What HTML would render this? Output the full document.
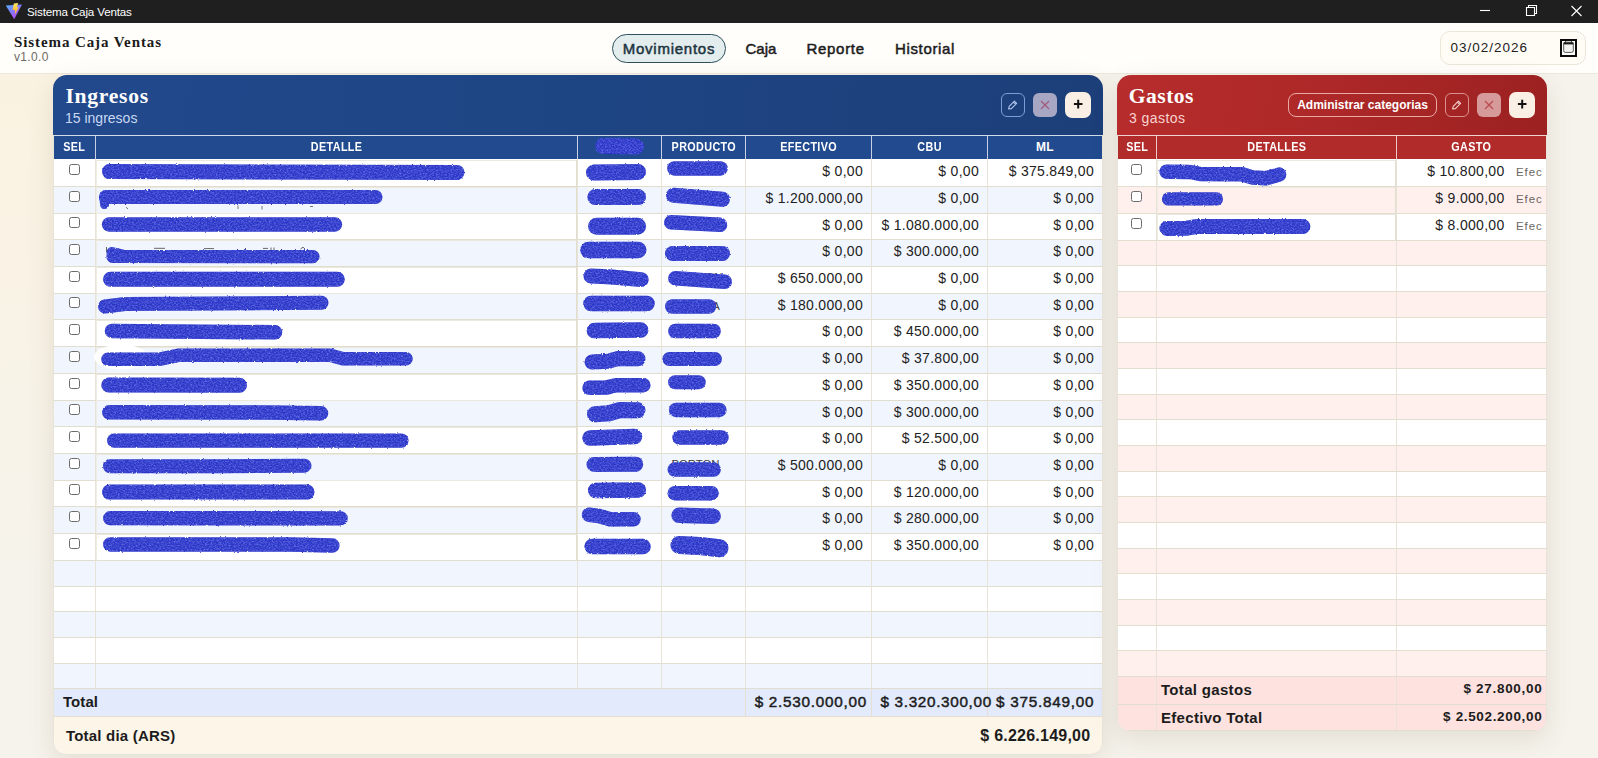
<!DOCTYPE html>
<html lang="es"><head><meta charset="utf-8"><title>Sistema Caja Ventas</title>
<style>
*{box-sizing:border-box;margin:0;padding:0}
html,body{width:1598px;height:758px;overflow:hidden}
body{position:relative;font-family:"Liberation Sans",sans-serif;color:#1c1c1c;
 background:radial-gradient(1100px 800px at 0% 0%,#fbf2df 0%,rgba(251,242,223,0) 75%),#f6f3ec;}
.abs{position:absolute}
#titlebar{left:0;top:0;width:1598px;height:23px;background:#1f1f1f;color:#fff;font-size:11.6px}
#titlebar .t{position:absolute;left:27px;top:5px;letter-spacing:-0.15px}
#apphead{left:0;top:23px;width:1598px;height:51px;background:#fffefb;border-bottom:1px solid #ece7dc}
#brand{left:14px;top:34px;font-family:"Liberation Serif",serif;font-weight:bold;font-size:15px;letter-spacing:.9px;color:#1b1b1b;white-space:nowrap}
#ver{left:14px;top:50px;font-size:12px;color:#6d6a64;letter-spacing:.35px}
.nav{top:35px;height:29px;line-height:28px;font-size:15px;color:#1c1c1c;white-space:nowrap;-webkit-text-stroke:.5px #1c1c1c}
#navact{left:612px;top:34px;width:114px;letter-spacing:.75px;border:1px solid #2f4f5c;border-radius:15px;background:#e4edee;text-align:center;color:#1d3540;-webkit-text-stroke:.5px #1d3540}
#date{left:1440px;top:31px;width:146px;height:34px;border:1px solid #ebe6da;border-radius:10px;background:#fffcf6}
#date span{position:absolute;left:9.5px;top:8px;font-size:13.5px;color:#222;letter-spacing:1px}
.panel{overflow:hidden}
.phead{position:absolute;left:0;top:0;width:100%;height:60px}
.ptitle{position:absolute;left:11.5px;top:9.25px;font-family:"Liberation Serif",serif;font-weight:bold;font-size:21.6px;letter-spacing:.72px;color:#fff;white-space:nowrap}
.psub{position:absolute;left:11px;top:35px;font-size:14px;white-space:nowrap}
.th{position:absolute;top:61px;height:23px;line-height:22px;text-align:center;color:#fff;font-weight:bold;font-size:12px;letter-spacing:.4px;white-space:nowrap;border-right:1px solid rgba(255,255,255,.75)}
.th span{display:inline-block;transform:scaleX(.9)}
.row{position:absolute;left:0;width:100%;border-bottom:1px solid #e2decf}
.c{position:absolute;top:0;height:100%;border-right:1px solid #e7e3d7}
.num{text-align:right;font-size:14px;letter-spacing:.3px;color:#222;white-space:nowrap;padding-right:8px}
.cb{position:absolute;width:11px;height:11px;border:1px solid #6b6b6b;border-radius:2.5px;background:#fff}
.inp{position:absolute;border:1px solid #e2decf;border-top-color:#ebe8de;border-left-color:#efece3}
.scr{position:absolute;background:#2c36c9;border-radius:9px}
.btn{position:absolute;top:18px;width:24px;height:24px;border-radius:6px}
</style></head><body>

<div id="titlebar" class="abs"><svg class="abs" style="left:5px;top:3px" width="18" height="18" viewBox="0 0 18 18"><defs><linearGradient id="vg" x1="0" y1="0" x2="0.75" y2="1"><stop offset="0" stop-color="#4fb6ff"/><stop offset="1" stop-color="#bd3cf6"/></linearGradient><linearGradient id="vy" x1="0" y1="0" x2="0" y2="1"><stop offset="0" stop-color="#ffe663"/><stop offset="1" stop-color="#ffa91c"/></linearGradient></defs><path d="M0.8 2.6 L17 1.4 L9.2 16.2 Z" fill="url(#vg)"/><path d="M8.8 0.4 L13.2 0 L11.8 4.3 L13.8 4 L9.9 11.6 L10 6.7 L7.6 7.1 Z" fill="url(#vy)"/></svg><span class="t">Sistema Caja Ventas</span>
<svg class="abs" style="left:1460px;top:0" width="138" height="23" viewBox="0 0 138 23"><g stroke="#fff" stroke-width="1.1" fill="none"><path d="M20 10.5 H30"/><path d="M66.5 7.5 H74.5 V15.5 H66.5 Z" /><path d="M68.5 7.5 V5.5 H76.5 V13.5 H74.5"/><path d="M111.5 6 L121.5 16 M121.5 6 L111.5 16"/></g></svg></div>
<div id="apphead" class="abs"></div>
<div id="brand" class="abs">Sistema Caja Ventas</div><div id="ver" class="abs">v1.0.0</div>
<div id="navact" class="abs nav">Movimientos</div>
<div class="abs nav" style="left:745.5px">Caja</div><div class="abs nav" style="left:806.5px;letter-spacing:.7px">Reporte</div><div class="abs nav" style="left:895px;letter-spacing:.65px">Historial</div>
<div id="date" class="abs"><span>03/02/2026</span><svg class="abs" style="left:119px;top:7px" width="17" height="18" viewBox="0 0 17 18"><rect x="1" y="1" width="15" height="16" fill="#fdfcf8" stroke="#0a0a0a" stroke-width="2"/><rect x="3.7" y="3.2" width="9.6" height="10.2" rx="1.6" fill="#f1f1f1" stroke="#5a5a5a" stroke-width="1"/><path d="M3.6 3.4 H13.4 V5.4 H3.6 Z" fill="#1a1a1a"/><path d="M5.6 2.2 V3.6 M11.4 2.2 V3.6" stroke="#1a1a1a" stroke-width="1"/></svg></div>
<div class="abs" style="left:53px;top:75px;width:1050px;height:679px;border-radius:14px 14px 13px 13px;box-shadow:0 8px 26px rgba(90,75,40,.12)"></div>
<div class="abs" style="left:53px;top:75px;width:1050px;height:679px;border-radius:14px 14px 13px 13px;overflow:hidden;background:#e9e4d8">
<div class="abs" style="left:0;top:0;width:1050px;height:60px;background:linear-gradient(100deg,#21498c 0%,#1e4584 45%,#1c3f79 100%)"></div>
<div class="abs panel" style="left:1px;top:0;width:1048px;height:679px;border-radius:0 0 12px 12px">
<div class="abs" style="left:0;top:60px;width:1048px;height:24px;background:#214a8f;border-top:1px solid rgba(255,255,255,.8)"></div>
<div class="ptitle">Ingresos</div><div class="psub" style="color:#c9d8f3">15 ingresos</div>
<div class="btn" style="left:947px;border:1px solid #7d9dd6"><svg width="22" height="22" viewBox="0 0 22 22"><path d="M6.6 15 L7.2 12.4 L12.4 7.2 L14.6 9.4 L9.4 14.6 Z M11.5 8.1 L13.7 10.3" fill="none" stroke="#b3c7ee" stroke-width="1.1" stroke-linejoin="round"/></svg></div>
<div class="btn" style="left:979px;background:#a8a7c3"><svg width="24" height="24" viewBox="0 0 24 24"><path d="M8 8 L16 16 M16 8 L8 16" stroke="#a2567a" stroke-width="1.1"/></svg></div>
<div class="btn" style="left:1011px;width:26px;height:26px;top:17px;background:#f9efe4;border-radius:7px"><svg width="26" height="26" viewBox="0 0 26 26"><path d="M13.2 7.8 V16.4 M8.9 12.1 H17.5" stroke="#111" stroke-width="2"/></svg></div>
<div class="th" style="left:0px;width:42px;"><span class="m">SEL</span></div>
<div class="th" style="left:42px;width:482px;"><span class="m">DETALLE</span></div>
<div class="th" style="left:524px;width:84px;"><span class="m"></span></div>
<div class="th" style="left:608px;width:84px;"><span class="m">PRODUCTO</span></div>
<div class="th" style="left:692px;width:126px;"><span class="m">EFECTIVO</span></div>
<div class="th" style="left:818px;width:116px;"><span class="m">CBU</span></div>
<div class="th" style="left:934px;width:114px;border-right:none;"><span class="m" style="transform:none">ML</span></div>
<div class="row" style="top:84px;height:28px;background:#fff">
<div class="c" style="left:0px;width:42px;"></div>
<div class="c" style="left:42px;width:482px;"></div>
<div class="c" style="left:524px;width:84px;"></div>
<div class="c" style="left:608px;width:84px;"></div>
<div class="c num" style="left:692px;width:126px;padding-top:1px;line-height:23.4px;"><span>$ 0,00</span></div>
<div class="c num" style="left:818px;width:116px;padding-top:1px;line-height:23.4px;"><span>$ 0,00</span></div>
<div class="c num" style="left:934px;width:114px;padding-top:1px;line-height:23.4px;border-right:none;"><span>$ 375.849,00</span></div>
<div class="cb" style="left:15px;top:5.4px"></div>
<div class="inp" style="left:42px;top:1px;width:481px;height:27px"></div>
</div>
<div class="row" style="top:112px;height:27px;background:#f1f6fe">
<div class="c" style="left:0px;width:42px;"></div>
<div class="c" style="left:42px;width:482px;"></div>
<div class="c" style="left:524px;width:84px;"></div>
<div class="c" style="left:608px;width:84px;"></div>
<div class="c num" style="left:692px;width:126px;padding-top:0px;line-height:23.4px;"><span>$ 1.200.000,00</span></div>
<div class="c num" style="left:818px;width:116px;padding-top:0px;line-height:23.4px;"><span>$ 0,00</span></div>
<div class="c num" style="left:934px;width:114px;padding-top:0px;line-height:23.4px;border-right:none;"><span>$ 0,00</span></div>
<div class="cb" style="left:15px;top:4.4px"></div>
<div class="inp" style="left:42px;top:0px;width:481px;height:27px"></div>
</div>
<div class="row" style="top:139px;height:26px;background:#fff">
<div class="c" style="left:0px;width:42px;"></div>
<div class="c" style="left:42px;width:482px;"></div>
<div class="c" style="left:524px;width:84px;"></div>
<div class="c" style="left:608px;width:84px;"></div>
<div class="c num" style="left:692px;width:126px;padding-top:-1px;line-height:23.4px;"><span>$ 0,00</span></div>
<div class="c num" style="left:818px;width:116px;padding-top:-1px;line-height:23.4px;"><span>$ 1.080.000,00</span></div>
<div class="c num" style="left:934px;width:114px;padding-top:-1px;line-height:23.4px;border-right:none;"><span>$ 0,00</span></div>
<div class="cb" style="left:15px;top:3.4px"></div>
<div class="inp" style="left:42px;top:-1px;width:481px;height:27px"></div>
</div>
<div class="row" style="top:165px;height:27px;background:#f1f6fe">
<div class="c" style="left:0px;width:42px;"></div>
<div class="c" style="left:42px;width:482px;"></div>
<div class="c" style="left:524px;width:84px;"></div>
<div class="c" style="left:608px;width:84px;"></div>
<div class="c num" style="left:692px;width:126px;padding-top:0px;line-height:23.4px;"><span>$ 0,00</span></div>
<div class="c num" style="left:818px;width:116px;padding-top:0px;line-height:23.4px;"><span>$ 300.000,00</span></div>
<div class="c num" style="left:934px;width:114px;padding-top:0px;line-height:23.4px;border-right:none;"><span>$ 0,00</span></div>
<div class="cb" style="left:15px;top:4.4px"></div>
<div class="inp" style="left:42px;top:0px;width:481px;height:27px"></div>
</div>
<div class="row" style="top:192px;height:27px;background:#fff">
<div class="c" style="left:0px;width:42px;"></div>
<div class="c" style="left:42px;width:482px;"></div>
<div class="c" style="left:524px;width:84px;"></div>
<div class="c" style="left:608px;width:84px;"></div>
<div class="c num" style="left:692px;width:126px;padding-top:0px;line-height:23.4px;"><span>$ 650.000,00</span></div>
<div class="c num" style="left:818px;width:116px;padding-top:0px;line-height:23.4px;"><span>$ 0,00</span></div>
<div class="c num" style="left:934px;width:114px;padding-top:0px;line-height:23.4px;border-right:none;"><span>$ 0,00</span></div>
<div class="cb" style="left:15px;top:4.4px"></div>
<div class="inp" style="left:42px;top:0px;width:481px;height:27px"></div>
</div>
<div class="row" style="top:219px;height:26px;background:#f1f6fe">
<div class="c" style="left:0px;width:42px;"></div>
<div class="c" style="left:42px;width:482px;"></div>
<div class="c" style="left:524px;width:84px;"></div>
<div class="c" style="left:608px;width:84px;"></div>
<div class="c num" style="left:692px;width:126px;padding-top:-1px;line-height:23.4px;"><span>$ 180.000,00</span></div>
<div class="c num" style="left:818px;width:116px;padding-top:-1px;line-height:23.4px;"><span>$ 0,00</span></div>
<div class="c num" style="left:934px;width:114px;padding-top:-1px;line-height:23.4px;border-right:none;"><span>$ 0,00</span></div>
<div class="cb" style="left:15px;top:3.4px"></div>
<div class="inp" style="left:42px;top:-1px;width:481px;height:27px"></div>
</div>
<div class="row" style="top:245px;height:27px;background:#fff">
<div class="c" style="left:0px;width:42px;"></div>
<div class="c" style="left:42px;width:482px;"></div>
<div class="c" style="left:524px;width:84px;"></div>
<div class="c" style="left:608px;width:84px;"></div>
<div class="c num" style="left:692px;width:126px;padding-top:0px;line-height:23.4px;"><span>$ 0,00</span></div>
<div class="c num" style="left:818px;width:116px;padding-top:0px;line-height:23.4px;"><span>$ 450.000,00</span></div>
<div class="c num" style="left:934px;width:114px;padding-top:0px;line-height:23.4px;border-right:none;"><span>$ 0,00</span></div>
<div class="cb" style="left:15px;top:4.4px"></div>
<div class="inp" style="left:42px;top:0px;width:481px;height:27px"></div>
</div>
<div class="row" style="top:272px;height:27px;background:#f1f6fe">
<div class="c" style="left:0px;width:42px;"></div>
<div class="c" style="left:42px;width:482px;"></div>
<div class="c" style="left:524px;width:84px;"></div>
<div class="c" style="left:608px;width:84px;"></div>
<div class="c num" style="left:692px;width:126px;padding-top:0px;line-height:23.4px;"><span>$ 0,00</span></div>
<div class="c num" style="left:818px;width:116px;padding-top:0px;line-height:23.4px;"><span>$ 37.800,00</span></div>
<div class="c num" style="left:934px;width:114px;padding-top:0px;line-height:23.4px;border-right:none;"><span>$ 0,00</span></div>
<div class="cb" style="left:15px;top:4.4px"></div>
<div class="inp" style="left:42px;top:0px;width:481px;height:27px"></div>
</div>
<div class="row" style="top:299px;height:27px;background:#fff">
<div class="c" style="left:0px;width:42px;"></div>
<div class="c" style="left:42px;width:482px;"></div>
<div class="c" style="left:524px;width:84px;"></div>
<div class="c" style="left:608px;width:84px;"></div>
<div class="c num" style="left:692px;width:126px;padding-top:0px;line-height:23.4px;"><span>$ 0,00</span></div>
<div class="c num" style="left:818px;width:116px;padding-top:0px;line-height:23.4px;"><span>$ 350.000,00</span></div>
<div class="c num" style="left:934px;width:114px;padding-top:0px;line-height:23.4px;border-right:none;"><span>$ 0,00</span></div>
<div class="cb" style="left:15px;top:4.4px"></div>
<div class="inp" style="left:42px;top:0px;width:481px;height:27px"></div>
</div>
<div class="row" style="top:326px;height:26px;background:#f1f6fe">
<div class="c" style="left:0px;width:42px;"></div>
<div class="c" style="left:42px;width:482px;"></div>
<div class="c" style="left:524px;width:84px;"></div>
<div class="c" style="left:608px;width:84px;"></div>
<div class="c num" style="left:692px;width:126px;padding-top:-1px;line-height:23.4px;"><span>$ 0,00</span></div>
<div class="c num" style="left:818px;width:116px;padding-top:-1px;line-height:23.4px;"><span>$ 300.000,00</span></div>
<div class="c num" style="left:934px;width:114px;padding-top:-1px;line-height:23.4px;border-right:none;"><span>$ 0,00</span></div>
<div class="cb" style="left:15px;top:3.4px"></div>
<div class="inp" style="left:42px;top:-1px;width:481px;height:27px"></div>
</div>
<div class="row" style="top:352px;height:27px;background:#fff">
<div class="c" style="left:0px;width:42px;"></div>
<div class="c" style="left:42px;width:482px;"></div>
<div class="c" style="left:524px;width:84px;"></div>
<div class="c" style="left:608px;width:84px;"></div>
<div class="c num" style="left:692px;width:126px;padding-top:0px;line-height:23.4px;"><span>$ 0,00</span></div>
<div class="c num" style="left:818px;width:116px;padding-top:0px;line-height:23.4px;"><span>$ 52.500,00</span></div>
<div class="c num" style="left:934px;width:114px;padding-top:0px;line-height:23.4px;border-right:none;"><span>$ 0,00</span></div>
<div class="cb" style="left:15px;top:4.4px"></div>
<div class="inp" style="left:42px;top:0px;width:481px;height:27px"></div>
</div>
<div class="row" style="top:379px;height:27px;background:#f1f6fe">
<div class="c" style="left:0px;width:42px;"></div>
<div class="c" style="left:42px;width:482px;"></div>
<div class="c" style="left:524px;width:84px;"></div>
<div class="c" style="left:608px;width:84px;"></div>
<div class="c num" style="left:692px;width:126px;padding-top:0px;line-height:23.4px;"><span>$ 500.000,00</span></div>
<div class="c num" style="left:818px;width:116px;padding-top:0px;line-height:23.4px;"><span>$ 0,00</span></div>
<div class="c num" style="left:934px;width:114px;padding-top:0px;line-height:23.4px;border-right:none;"><span>$ 0,00</span></div>
<div class="cb" style="left:15px;top:4.4px"></div>
<div class="inp" style="left:42px;top:0px;width:481px;height:27px"></div>
</div>
<div class="row" style="top:406px;height:26px;background:#fff">
<div class="c" style="left:0px;width:42px;"></div>
<div class="c" style="left:42px;width:482px;"></div>
<div class="c" style="left:524px;width:84px;"></div>
<div class="c" style="left:608px;width:84px;"></div>
<div class="c num" style="left:692px;width:126px;padding-top:-1px;line-height:23.4px;"><span>$ 0,00</span></div>
<div class="c num" style="left:818px;width:116px;padding-top:-1px;line-height:23.4px;"><span>$ 120.000,00</span></div>
<div class="c num" style="left:934px;width:114px;padding-top:-1px;line-height:23.4px;border-right:none;"><span>$ 0,00</span></div>
<div class="cb" style="left:15px;top:3.4px"></div>
<div class="inp" style="left:42px;top:-1px;width:481px;height:27px"></div>
</div>
<div class="row" style="top:432px;height:27px;background:#f1f6fe">
<div class="c" style="left:0px;width:42px;"></div>
<div class="c" style="left:42px;width:482px;"></div>
<div class="c" style="left:524px;width:84px;"></div>
<div class="c" style="left:608px;width:84px;"></div>
<div class="c num" style="left:692px;width:126px;padding-top:0px;line-height:23.4px;"><span>$ 0,00</span></div>
<div class="c num" style="left:818px;width:116px;padding-top:0px;line-height:23.4px;"><span>$ 280.000,00</span></div>
<div class="c num" style="left:934px;width:114px;padding-top:0px;line-height:23.4px;border-right:none;"><span>$ 0,00</span></div>
<div class="cb" style="left:15px;top:4.4px"></div>
<div class="inp" style="left:42px;top:0px;width:481px;height:27px"></div>
</div>
<div class="row" style="top:459px;height:27px;background:#fff">
<div class="c" style="left:0px;width:42px;"></div>
<div class="c" style="left:42px;width:482px;"></div>
<div class="c" style="left:524px;width:84px;"></div>
<div class="c" style="left:608px;width:84px;"></div>
<div class="c num" style="left:692px;width:126px;padding-top:0px;line-height:23.4px;"><span>$ 0,00</span></div>
<div class="c num" style="left:818px;width:116px;padding-top:0px;line-height:23.4px;"><span>$ 350.000,00</span></div>
<div class="c num" style="left:934px;width:114px;padding-top:0px;line-height:23.4px;border-right:none;"><span>$ 0,00</span></div>
<div class="cb" style="left:15px;top:4.4px"></div>
<div class="inp" style="left:42px;top:0px;width:481px;height:27px"></div>
</div>
<div class="row" style="top:486px;height:26px;background:#f1f6fe">
<div class="c" style="left:0px;width:42px;"></div>
<div class="c" style="left:42px;width:482px;"></div>
<div class="c" style="left:524px;width:84px;"></div>
<div class="c" style="left:608px;width:84px;"></div>
<div class="c" style="left:692px;width:126px;"></div>
<div class="c" style="left:818px;width:116px;"></div>
<div class="c" style="left:934px;width:114px;border-right:none;"></div>
</div>
<div class="row" style="top:512px;height:25px;background:#fff">
<div class="c" style="left:0px;width:42px;"></div>
<div class="c" style="left:42px;width:482px;"></div>
<div class="c" style="left:524px;width:84px;"></div>
<div class="c" style="left:608px;width:84px;"></div>
<div class="c" style="left:692px;width:126px;"></div>
<div class="c" style="left:818px;width:116px;"></div>
<div class="c" style="left:934px;width:114px;border-right:none;"></div>
</div>
<div class="row" style="top:537px;height:26px;background:#f1f6fe">
<div class="c" style="left:0px;width:42px;"></div>
<div class="c" style="left:42px;width:482px;"></div>
<div class="c" style="left:524px;width:84px;"></div>
<div class="c" style="left:608px;width:84px;"></div>
<div class="c" style="left:692px;width:126px;"></div>
<div class="c" style="left:818px;width:116px;"></div>
<div class="c" style="left:934px;width:114px;border-right:none;"></div>
</div>
<div class="row" style="top:563px;height:26px;background:#fff">
<div class="c" style="left:0px;width:42px;"></div>
<div class="c" style="left:42px;width:482px;"></div>
<div class="c" style="left:524px;width:84px;"></div>
<div class="c" style="left:608px;width:84px;"></div>
<div class="c" style="left:692px;width:126px;"></div>
<div class="c" style="left:818px;width:116px;"></div>
<div class="c" style="left:934px;width:114px;border-right:none;"></div>
</div>
<div class="row" style="top:589px;height:25px;background:#f1f6fe">
<div class="c" style="left:0px;width:42px;"></div>
<div class="c" style="left:42px;width:482px;"></div>
<div class="c" style="left:524px;width:84px;"></div>
<div class="c" style="left:608px;width:84px;"></div>
<div class="c" style="left:692px;width:126px;"></div>
<div class="c" style="left:818px;width:116px;"></div>
<div class="c" style="left:934px;width:114px;border-right:none;"></div>
</div>
<div class="row" style="top:614px;height:28px;background:#e2eafb;border-bottom:1px solid #e4dfd0;font-size:15px;line-height:26px">
<div class="abs t1" style="left:9px;font-weight:bold;letter-spacing:.07px">Total</div>
<div class="abs" style="left:691px;width:1px;background:#e4dfd0;height:27px"></div>
<div class="abs" style="left:817px;width:1px;background:#e4dfd0;height:27px"></div>
<div class="abs" style="left:933px;width:1px;background:#e4dfd0;height:27px"></div>
<div class="abs t2" style="right:235.07px;font-size:15.3px;letter-spacing:0.73px;white-space:nowrap;-webkit-text-stroke:.45px #1c1c1c">$ 2.530.000,00</div>
<div class="abs t2" style="right:110.14px;font-size:15.3px;letter-spacing:0.66px;white-space:nowrap;-webkit-text-stroke:.45px #1c1c1c">$ 3.320.300,00</div>
<div class="abs t2" style="right:7.64px;font-size:15.3px;letter-spacing:0.76px;white-space:nowrap;-webkit-text-stroke:.45px #1c1c1c">$ 375.849,00</div>
</div>
<div class="abs" style="left:0;top:642px;width:1048px;height:37px;background:#fdf5e7;line-height:37px;font-weight:bold"><span class="abs t3" style="left:12px;font-size:15px;letter-spacing:.2px">Total dia (ARS)</span><span class="abs t4" style="right:11.67px;font-size:16px;letter-spacing:.23px">$ 6.226.149,00</span></div>
</div></div>
<div class="abs" style="left:1117px;top:75px;width:430px;height:656px;border-radius:14px 14px 13px 13px;box-shadow:0 8px 26px rgba(90,75,40,.12)"></div>
<div class="abs" style="left:1117px;top:75px;width:430px;height:656px;border-radius:14px 14px 13px 13px;overflow:hidden;background:#e9e4d8">
<div class="abs" style="left:0;top:0;width:430px;height:60px;background:linear-gradient(100deg,#b72c2c 0%,#ad2828 50%,#9c2121 100%)"></div>
<div class="abs panel" style="left:1px;top:0;width:428px;height:656px;border-radius:0 0 12px 12px">
<div class="abs" style="left:0;top:60px;width:428px;height:24px;background:#b22b2b;border-top:1px solid rgba(255,255,255,.8)"></div>
<div class="ptitle" style="left:10.8px;letter-spacing:.46px">Gastos</div><div class="psub" style="color:#f6d3d0;letter-spacing:.45px">3 gastos</div>
<div class="abs" style="left:170px;top:18px;width:149px;height:24px;border:1px solid #eba9a5;border-radius:8px;color:#fff;font-weight:bold;font-size:12px;line-height:22px;text-align:center;white-space:nowrap">Administrar categorias</div>
<div class="btn" style="left:327px;border:1px solid #dc8f8c"><svg width="22" height="22" viewBox="0 0 22 22"><path d="M6.6 15 L7.2 12.4 L12.4 7.2 L14.6 9.4 L9.4 14.6 Z M11.5 8.1 L13.7 10.3" fill="none" stroke="#f2cfcc" stroke-width="1.1" stroke-linejoin="round"/></svg></div>
<div class="btn" style="left:359px;background:#d79a9b"><svg width="24" height="24" viewBox="0 0 24 24"><path d="M8 8 L16 16 M16 8 L8 16" stroke="#b94a4d" stroke-width="1.2"/></svg></div>
<div class="btn" style="left:391px;width:26px;height:26px;top:17px;background:#f9efe4;border-radius:7px"><svg width="26" height="26" viewBox="0 0 26 26"><path d="M13.2 7.8 V16.4 M8.9 12.1 H17.5" stroke="#111" stroke-width="2"/></svg></div>
<div class="th" style="left:0px;width:39px;"><span class="m">SEL</span></div>
<div class="th" style="left:39px;width:240px;"><span class="m">DETALLES</span></div>
<div class="th" style="left:279px;width:149px;border-right:none;"><span class="m">GASTO</span></div>
<div class="row" style="top:84px;height:28px;background:#fff">
<div class="c" style="left:0px;width:39px;"></div>
<div class="c" style="left:39px;width:240px;"></div>
<div class="c" style="left:279px;width:149px;border-right:none;"><span class="abs g1" style="right:41.5px;top:1px;line-height:23.4px;font-size:14px;letter-spacing:.3px;color:#222;white-space:nowrap">$ 10.800,00</span><span class="abs g2" style="right:3.5px;top:1px;line-height:24.4px;font-size:11.5px;color:#6b6661;letter-spacing:.85px">Efec</span></div>
<div class="cb" style="left:13px;top:5.4px"></div>
<div class="inp" style="left:39px;top:1px;width:239px;height:27px"></div>
</div>
<div class="row" style="top:112px;height:27px;background:#fff0ee">
<div class="c" style="left:0px;width:39px;"></div>
<div class="c" style="left:39px;width:240px;"></div>
<div class="c" style="left:279px;width:149px;border-right:none;"><span class="abs g1" style="right:41.5px;top:0px;line-height:23.4px;font-size:14px;letter-spacing:.3px;color:#222;white-space:nowrap">$ 9.000,00</span><span class="abs g2" style="right:3.5px;top:0px;line-height:24.4px;font-size:11.5px;color:#6b6661;letter-spacing:.85px">Efec</span></div>
<div class="cb" style="left:13px;top:4.4px"></div>
<div class="inp" style="left:39px;top:0px;width:239px;height:27px"></div>
</div>
<div class="row" style="top:139px;height:27px;background:#fff">
<div class="c" style="left:0px;width:39px;"></div>
<div class="c" style="left:39px;width:240px;"></div>
<div class="c" style="left:279px;width:149px;border-right:none;"><span class="abs g1" style="right:41.5px;top:0px;line-height:23.4px;font-size:14px;letter-spacing:.3px;color:#222;white-space:nowrap">$ 8.000,00</span><span class="abs g2" style="right:3.5px;top:0px;line-height:24.4px;font-size:11.5px;color:#6b6661;letter-spacing:.85px">Efec</span></div>
<div class="cb" style="left:13px;top:4.4px"></div>
<div class="inp" style="left:39px;top:0px;width:239px;height:27px"></div>
</div>
<div class="row" style="top:166px;height:25px;background:#fff0ee">
<div class="c" style="left:0px;width:39px;"></div>
<div class="c" style="left:39px;width:240px;"></div>
<div class="c" style="left:279px;width:149px;border-right:none;"></div>
</div>
<div class="row" style="top:191px;height:26px;background:#fff">
<div class="c" style="left:0px;width:39px;"></div>
<div class="c" style="left:39px;width:240px;"></div>
<div class="c" style="left:279px;width:149px;border-right:none;"></div>
</div>
<div class="row" style="top:217px;height:26px;background:#fff0ee">
<div class="c" style="left:0px;width:39px;"></div>
<div class="c" style="left:39px;width:240px;"></div>
<div class="c" style="left:279px;width:149px;border-right:none;"></div>
</div>
<div class="row" style="top:243px;height:25px;background:#fff">
<div class="c" style="left:0px;width:39px;"></div>
<div class="c" style="left:39px;width:240px;"></div>
<div class="c" style="left:279px;width:149px;border-right:none;"></div>
</div>
<div class="row" style="top:268px;height:26px;background:#fff0ee">
<div class="c" style="left:0px;width:39px;"></div>
<div class="c" style="left:39px;width:240px;"></div>
<div class="c" style="left:279px;width:149px;border-right:none;"></div>
</div>
<div class="row" style="top:294px;height:26px;background:#fff">
<div class="c" style="left:0px;width:39px;"></div>
<div class="c" style="left:39px;width:240px;"></div>
<div class="c" style="left:279px;width:149px;border-right:none;"></div>
</div>
<div class="row" style="top:320px;height:25px;background:#fff0ee">
<div class="c" style="left:0px;width:39px;"></div>
<div class="c" style="left:39px;width:240px;"></div>
<div class="c" style="left:279px;width:149px;border-right:none;"></div>
</div>
<div class="row" style="top:345px;height:26px;background:#fff">
<div class="c" style="left:0px;width:39px;"></div>
<div class="c" style="left:39px;width:240px;"></div>
<div class="c" style="left:279px;width:149px;border-right:none;"></div>
</div>
<div class="row" style="top:371px;height:26px;background:#fff0ee">
<div class="c" style="left:0px;width:39px;"></div>
<div class="c" style="left:39px;width:240px;"></div>
<div class="c" style="left:279px;width:149px;border-right:none;"></div>
</div>
<div class="row" style="top:397px;height:25px;background:#fff">
<div class="c" style="left:0px;width:39px;"></div>
<div class="c" style="left:39px;width:240px;"></div>
<div class="c" style="left:279px;width:149px;border-right:none;"></div>
</div>
<div class="row" style="top:422px;height:26px;background:#fff0ee">
<div class="c" style="left:0px;width:39px;"></div>
<div class="c" style="left:39px;width:240px;"></div>
<div class="c" style="left:279px;width:149px;border-right:none;"></div>
</div>
<div class="row" style="top:448px;height:26px;background:#fff">
<div class="c" style="left:0px;width:39px;"></div>
<div class="c" style="left:39px;width:240px;"></div>
<div class="c" style="left:279px;width:149px;border-right:none;"></div>
</div>
<div class="row" style="top:474px;height:25px;background:#fff0ee">
<div class="c" style="left:0px;width:39px;"></div>
<div class="c" style="left:39px;width:240px;"></div>
<div class="c" style="left:279px;width:149px;border-right:none;"></div>
</div>
<div class="row" style="top:499px;height:26px;background:#fff">
<div class="c" style="left:0px;width:39px;"></div>
<div class="c" style="left:39px;width:240px;"></div>
<div class="c" style="left:279px;width:149px;border-right:none;"></div>
</div>
<div class="row" style="top:525px;height:26px;background:#fff0ee">
<div class="c" style="left:0px;width:39px;"></div>
<div class="c" style="left:39px;width:240px;"></div>
<div class="c" style="left:279px;width:149px;border-right:none;"></div>
</div>
<div class="row" style="top:551px;height:25px;background:#fff">
<div class="c" style="left:0px;width:39px;"></div>
<div class="c" style="left:39px;width:240px;"></div>
<div class="c" style="left:279px;width:149px;border-right:none;"></div>
</div>
<div class="row" style="top:576px;height:26px;background:#fff0ee">
<div class="c" style="left:0px;width:39px;"></div>
<div class="c" style="left:39px;width:240px;"></div>
<div class="c" style="left:279px;width:149px;border-right:none;"></div>
</div>
<div class="row" style="top:602px;height:28px;background:#fde2df;font-weight:bold;line-height:26px">
<div class="c" style="left:0;width:39px"></div><div class="c" style="left:39px;width:240px"></div>
<div class="abs t5" style="left:43px;font-size:15px;letter-spacing:0.32px;white-space:nowrap">Total gastos</div><div class="abs t6" style="right:3.61px;font-size:13.5px;letter-spacing:0.69px;line-height:23px;white-space:nowrap">$ 27.800,00</div></div>
<div class="row" style="top:630px;height:26px;background:#fde2df;font-weight:bold;line-height:26px">
<div class="c" style="left:0;width:39px"></div><div class="c" style="left:39px;width:240px"></div>
<div class="abs t5" style="left:43px;font-size:15px;letter-spacing:0.3px;white-space:nowrap">Efectivo Total</div><div class="abs t6" style="right:3.64px;font-size:13.5px;letter-spacing:0.66px;line-height:23px;white-space:nowrap">$ 2.502.200,00</div></div>
</div></div>
<svg class="abs" style="left:0;top:0;pointer-events:none" width="1598" height="758" viewBox="0 0 1598 758" fill="none" stroke="#2c36c6" stroke-linecap="round" stroke-linejoin="round">
<g stroke="none" fill="#3a3a3a" font-family="Liberation Sans, sans-serif" font-size="11.3">
<text x="674.5" y="280.9">PORTON</text><text x="671.5" y="468.3">PORTON</text><text x="712.3" y="310.2">A</text>
</g>
<ellipse cx="121" cy="357" rx="27" ry="12.5" fill="#fff" stroke="none"/>
<g stroke="#666" stroke-width="1" stroke-linecap="butt"><path d="M106.5 247 V252 M154 248.3 H165 M204 248.6 H214 M245.5 248 V251 M263 248.4 H268 M271 247.5 V251 M274 247.5 V251 M300.5 249 L303 247.2 L305 249"/><path d="M126 207.2 L128 209 M238 205.5 V209 M262 206 V209.5 M310 206.5 H313" stroke="#777" stroke-width="1"/></g>
<defs><filter id="rough" x="0" y="0" width="1598" height="758" filterUnits="userSpaceOnUse" color-interpolation-filters="sRGB"><feTurbulence type="fractalNoise" baseFrequency="0.55 0.75" numOctaves="2" seed="7" result="n"/><feDisplacementMap in="SourceGraphic" in2="n" scale="2.2" xChannelSelector="R" yChannelSelector="G" result="d"/><feColorMatrix in="n" type="matrix" values="0 0 0 0 0.42  0 0 0 0 0.47  0 0 0 0 0.93  1.9 0 0 0 -0.72" result="sp"/><feComposite in="sp" in2="d" operator="in" result="spk"/><feMerge><feMergeNode in="d"/><feMergeNode in="spk"/></feMerge></filter></defs>
<g filter="url(#rough)">
<path d="M109.5 171.6 L457 172.4" stroke-width="15"/>
<path d="M106 197 L375.4 197" stroke-width="14.2"/>
<path d="M104 198 L104.5 204.5" stroke-width="9"/>
<path d="M109 224.5 L335 224.5" stroke-width="14.3"/>
<path d="M113 256.5 L313 256.6" stroke-width="13.2"/>
<path d="M112 252.5 L125 255.5" stroke-width="11"/>
<path d="M110.5 279.2 L337.3 279.2" stroke-width="15"/>
<path d="M105 306.5 L125 304 L321.5 302.8" stroke-width="14"/>
<path d="M112 331 L275 332.3" stroke-width="14.5"/>
<path d="M108 359.2 L160 359.2 L178 355.3 L330 355.3 L343 358.8 L406 358.8" stroke-width="13.5"/>
<path d="M108.8 385 L239.5 385.3" stroke-width="15"/>
<path d="M109.3 412.3 L265 412.5 L321 413.3" stroke-width="14.5"/>
<path d="M114.2 440.6 L401.4 440.6" stroke-width="14.3"/>
<path d="M110 466.2 L225 466.2 L304.5 465.7" stroke-width="14"/>
<path d="M109.5 492.1 L307 492.1" stroke-width="15"/>
<path d="M110.2 518.2 L340.6 518.3" stroke-width="14.3"/>
<path d="M110.3 544.4 L290 544.5 L332.3 545.6" stroke-width="14.5"/>
<path d="M603.3 146 L636 146.6" stroke-width="16"/>
<path d="M594 172.6 L638 172" stroke-width="16"/>
<path d="M595.4 197.1 L638 197.1" stroke-width="16"/>
<path d="M596.6 226.3 L637.5 226.3" stroke-width="17"/>
<path d="M588.5 250 L638.2 250" stroke-width="16.5"/>
<path d="M591 276 L612 277 L641.2 279.6" stroke-width="15"/>
<path d="M591 303.4 L647 303.4" stroke-width="15.5"/>
<path d="M594.4 330.6 L640.7 330" stroke-width="15.5"/>
<path d="M592 362 L608 361.3 L618 358.6 L638 358.8" stroke-width="15"/>
<path d="M589.6 387.8 L606 387.6 L616 385.2 L643.3 385.2" stroke-width="14.5"/>
<path d="M595 414.2 L609 413.2 L620 410 L637.5 410.2" stroke-width="16"/>
<path d="M590 438 L634.5 436.6" stroke-width="15.5"/>
<path d="M594 464.5 L635.7 464.2" stroke-width="15"/>
<path d="M595.7 490.5 L638.3 490" stroke-width="15.5"/>
<path d="M589 514.8 L599 516 L610 519.2 L633.5 519.3" stroke-width="14.5"/>
<path d="M592.1 546.4 L643 546.6" stroke-width="15.5"/>
<path d="M674.4 168.4 L720.5 168.4" stroke-width="14.5"/>
<path d="M673.5 195.3 L722.5 199.2" stroke-width="15"/>
<path d="M671.3 222.3 L720 224.8" stroke-width="14.5"/>
<path d="M672.5 253.5 L722.5 253.5" stroke-width="15"/>
<path d="M675.4 278.3 L724.8 281.8" stroke-width="14.5"/>
<path d="M672.3 306.5 L709 306.5" stroke-width="14.5"/>
<path d="M675.4 331 L713.6 331" stroke-width="14.5"/>
<path d="M669.5 359 L714.8 359" stroke-width="14.2"/>
<path d="M675.1 382.2 L698.7 382.2" stroke-width="14"/>
<path d="M676.1 409.9 L719.3 409.9" stroke-width="14.5"/>
<path d="M679.6 437.5 L721.4 437.5" stroke-width="14.5"/>
<path d="M674.8 469.6 L713.6 469.6" stroke-width="14.5"/>
<path d="M674.8 493.2 L711.5 493.2" stroke-width="14.5"/>
<path d="M679.1 515.3 L713.1 516.2" stroke-width="15.5"/>
<path d="M679.4 545 L700 546 L719.4 548.2" stroke-width="18"/>
<path d="M1166.6 171.7 L1190 172 L1200 174 L1242 174.3 L1253 177.6 L1266 178.3 L1279 174.6" stroke-width="14.5"/>
<path d="M1168.6 198.9 L1216.3 198.9" stroke-width="13.4"/>
<path d="M1166.9 228.4 L1187 228.2 L1196 226.6 L1302.8 226.5" stroke-width="15"/>
</g></svg>
</body></html>
